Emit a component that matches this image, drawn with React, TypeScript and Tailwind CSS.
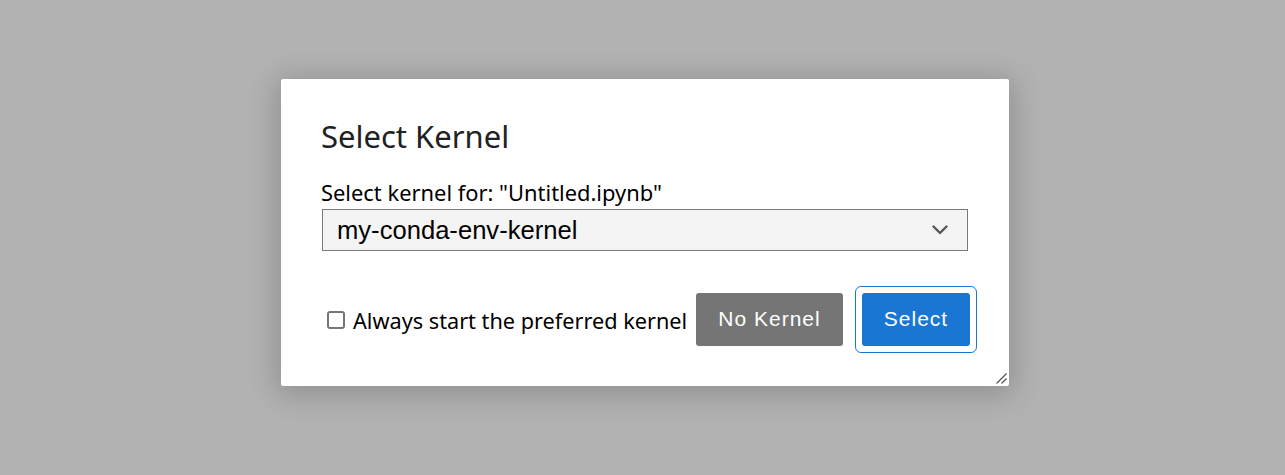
import React from "react";

const ui = { fontFamily: "'Noto Sans', 'Open Sans', sans-serif" };
const arial = { fontFamily: "'Liberation Sans', Arial, sans-serif" };

function Chevron() {
  return (
    <svg width="16" height="10" viewBox="0 0 16 10" fill="none">
      <path d="M1.5 1.5 L8 8 L14.5 1.5" stroke="#555" strokeWidth="2.4" strokeLinecap="round" strokeLinejoin="round" />
    </svg>
  );
}

function ResizeGrip() {
  return (
    <svg className="absolute right-[2px] bottom-[2px]" width="11" height="11" viewBox="0 0 11 11">
      <path d="M0.5 10.5 L10.5 0.5 M5.5 10.5 L10.5 5.5" stroke="#555" strokeWidth="1.3" />
    </svg>
  );
}

export default function App() {
  return (
    <div className="w-[1285px] h-[475px] bg-[#b2b2b2] pl-[281px] pt-[79px]" style={ui}>
      <div className="relative w-[728px] h-[307px] bg-white rounded-[2px] shadow-[0_4px_30px_4px_rgba(0,0,0,0.2)] px-[40px] pt-[39px] pb-[40px]">
        <h1 className="text-[31px] leading-[36px] text-[#212121]">Select Kernel</h1>

        <div className="mt-[26px] text-[21.9px] leading-[26px] text-black">
          Select kernel for: "Untitled.ipynb"
        </div>

        <div className="mt-[3px] mx-[1px] h-[42px] flex items-center justify-between bg-[#f4f4f4] border border-[#7a7a7a] pl-[14px] pr-[19px]">
          <span className="text-[25.6px] text-black" style={arial}>
            my-conda-env-kernel
          </span>
          <Chevron />
        </div>

        <div className="mt-[42px] -mr-[1px] h-[53px] flex items-center">
          <label className="ml-[6px] flex items-center gap-[8px] text-[21.7px] leading-[26px] text-black">
            <span className="w-[18px] h-[18px] rounded-[3px] border-2 border-[#767676] bg-white" />
            <span className="pt-[3px]">Always start the preferred kernel</span>
          </label>

          <button
            className="ml-auto w-[147px] h-[53px] pt-[14px] pb-[15px] rounded-[3px] bg-[#757575] text-white text-[21px] leading-[24px] tracking-[1px] text-center"
            style={arial}
          >
            No Kernel
          </button>

          <button
            className="relative ml-[19px] w-[108px] h-[53px] pt-[14px] pb-[15px] rounded-[3px] bg-[#1976d2] text-white text-[21px] leading-[24px] tracking-[1px] text-center"
            style={arial}
          >
            <span className="absolute -inset-[7px] rounded-[6px] border border-[#1976d2]" />
            Select
          </button>
        </div>

        <ResizeGrip />
      </div>
    </div>
  );
}
